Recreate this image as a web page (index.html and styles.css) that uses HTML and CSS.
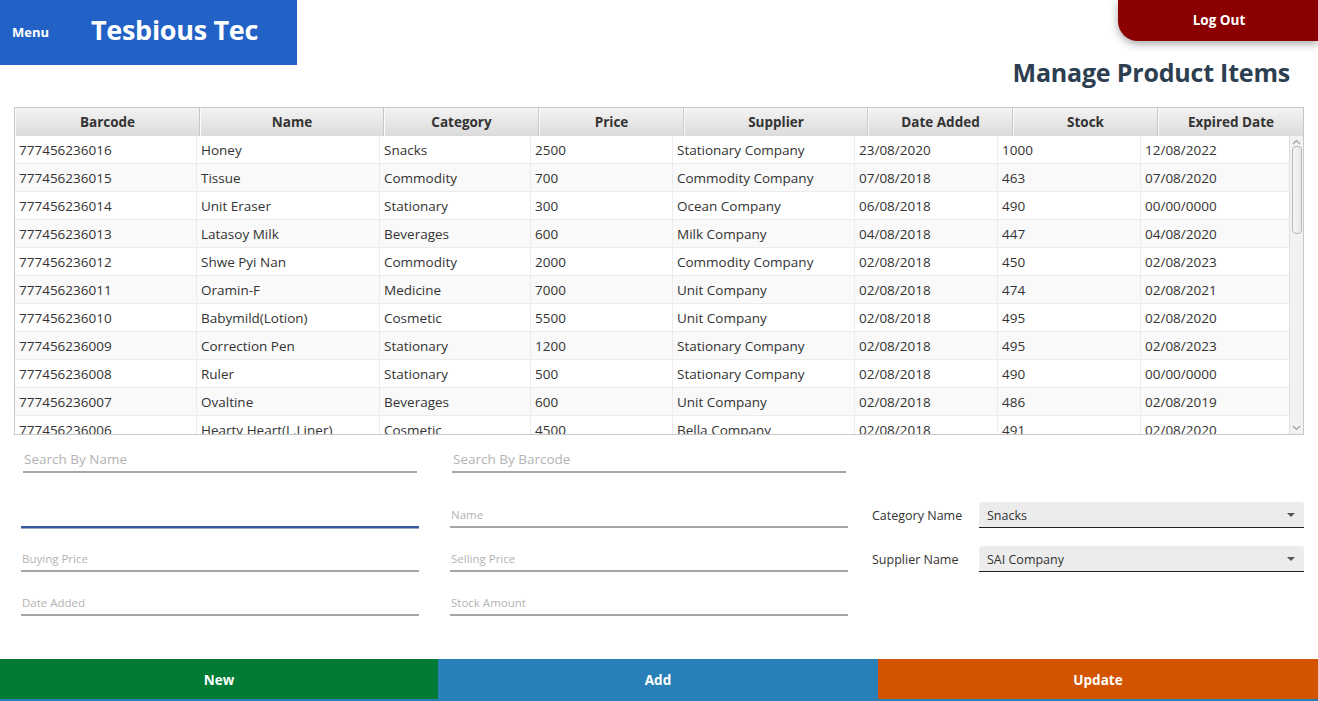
FILE: index.html
```html
<!DOCTYPE html>
<html>
<head>
<meta charset="utf-8">
<title>Manage Product Items</title>
<link rel="stylesheet" href="styles.css">
</head>
<body>
<div class="page">
  <div class="top">
    <div class="brand">
      <span class="menu">Menu</span>
      <span class="brand-name">Tesbious Tec</span>
    </div>
    <div class="top-right">
      <button class="logout">Log Out</button>
      <h1 class="title">Manage Product Items</h1>
    </div>
  </div>

  <div class="table">
    <div class="thead">
      <div class="th">Barcode</div>
      <div class="th">Name</div>
      <div class="th">Category</div>
      <div class="th">Price</div>
      <div class="th">Supplier</div>
      <div class="th">Date Added</div>
      <div class="th">Stock</div>
      <div class="th">Expired Date</div>
    </div>
    <div class="tbody-wrap">
      <div class="tbody">
        <div class="tr"><div>777456236016</div><div>Honey</div><div>Snacks</div><div>2500</div><div>Stationary Company</div><div>23/08/2020</div><div>1000</div><div>12/08/2022</div></div>
        <div class="tr"><div>777456236015</div><div>Tissue</div><div>Commodity</div><div>700</div><div>Commodity Company</div><div>07/08/2018</div><div>463</div><div>07/08/2020</div></div>
        <div class="tr"><div>777456236014</div><div>Unit Eraser</div><div>Stationary</div><div>300</div><div>Ocean Company</div><div>06/08/2018</div><div>490</div><div>00/00/0000</div></div>
        <div class="tr"><div>777456236013</div><div>Latasoy Milk</div><div>Beverages</div><div>600</div><div>Milk Company</div><div>04/08/2018</div><div>447</div><div>04/08/2020</div></div>
        <div class="tr"><div>777456236012</div><div>Shwe Pyi Nan</div><div>Commodity</div><div>2000</div><div>Commodity Company</div><div>02/08/2018</div><div>450</div><div>02/08/2023</div></div>
        <div class="tr"><div>777456236011</div><div>Oramin-F</div><div>Medicine</div><div>7000</div><div>Unit Company</div><div>02/08/2018</div><div>474</div><div>02/08/2021</div></div>
        <div class="tr"><div>777456236010</div><div>Babymild(Lotion)</div><div>Cosmetic</div><div>5500</div><div>Unit Company</div><div>02/08/2018</div><div>495</div><div>02/08/2020</div></div>
        <div class="tr"><div>777456236009</div><div>Correction Pen</div><div>Stationary</div><div>1200</div><div>Stationary Company</div><div>02/08/2018</div><div>495</div><div>02/08/2023</div></div>
        <div class="tr"><div>777456236008</div><div>Ruler</div><div>Stationary</div><div>500</div><div>Stationary Company</div><div>02/08/2018</div><div>490</div><div>00/00/0000</div></div>
        <div class="tr"><div>777456236007</div><div>Ovaltine</div><div>Beverages</div><div>600</div><div>Unit Company</div><div>02/08/2018</div><div>486</div><div>02/08/2019</div></div>
        <div class="tr"><div>777456236006</div><div>Hearty Heart(L.Liner)</div><div>Cosmetic</div><div>4500</div><div>Bella Company</div><div>02/08/2018</div><div>491</div><div>02/08/2020</div></div>
      </div>
      <div class="scrollbar">
        <svg class="arrow" width="9" height="6" viewBox="0 0 9 6"><path d="M1 5 L4.5 1.5 L8 5" fill="none" stroke="#a0a0a0" stroke-width="1.2"/></svg>
        <div class="track"><div class="thumb"></div></div>
        <svg class="arrow" width="9" height="6" viewBox="0 0 9 6"><path d="M1 1 L4.5 4.5 L8 1" fill="none" stroke="#a0a0a0" stroke-width="1.2"/></svg>
      </div>
    </div>
  </div>

  <div class="form">
    <div class="field search first"><span class="ph big">Search By Name</span></div>
    <div class="field search second"><span class="ph big">Search By Barcode</span></div>
    <div class="empty"></div>

    <div class="field focused"></div>
    <div class="field"><span class="ph">Name</span></div>
    <div class="combo-row">
      <span class="combo-label">Category Name</span>
      <div class="combo"><span>Snacks</span><span class="caret"></span></div>
    </div>

    <div class="field"><span class="ph">Buying Price</span></div>
    <div class="field"><span class="ph">Selling Price</span></div>
    <div class="combo-row">
      <span class="combo-label">Supplier Name</span>
      <div class="combo"><span>SAI Company</span><span class="caret"></span></div>
    </div>

    <div class="field"><span class="ph">Date Added</span></div>
    <div class="field"><span class="ph">Stock Amount</span></div>
    <div class="empty"></div>
  </div>

  <div class="actions">
    <button class="act new">New</button>
    <button class="act add">Add</button>
    <button class="act update">Update</button>
  </div>
</div>
</body>
</html>
```

FILE: styles.css
```css
* { box-sizing: border-box; }
html, body { margin: 0; padding: 0; }
body {
  font-family: "Open Sans", "Noto Sans", sans-serif;
  color: #333;
  background: #fff;
  width: 1318px;
  height: 701px;
  overflow: hidden;
}
.page {
  display: flex;
  flex-direction: column;
  height: 701px;
}
.top {
  display: flex;
  justify-content: space-between;
  align-items: flex-start;
}
.brand {
  width: 297px;
  height: 65px;
  background: #2262c6;
  color: #fff;
  display: flex;
  align-items: center;
  padding-left: 12px;
}
.menu {
  font-weight: 700;
  font-size: 13px;
  width: 79px;
  margin-top: -2px;
}
.brand-name {
  font-weight: 700;
  font-size: 27px;
  letter-spacing: -0.3px;
  margin-top: -7px;
}
.top-right {
  display: flex;
  flex-direction: column;
  align-items: flex-end;
}
.logout {
  width: 200px;
  height: 41px;
  border: none;
  background: #8b0000;
  color: #fff;
  font-family: inherit;
  font-weight: 700;
  font-size: 13.5px;
  border-bottom-left-radius: 20px;
  box-shadow: 0 3px 8px rgba(0,0,0,0.35);
  padding: 0 0 2px 2px;
}
.title {
  margin: 15px 28px 0 0;
  font-size: 25px;
  line-height: 32px;
  font-weight: 700;
  color: #2c3e50;
  letter-spacing: -0.2px;
}

/* table */
.table {
  margin: 19px 0 0 14px;
  width: 1290px;
  border: 1px solid #c8c8c8;
  font-size: 13.5px;
}
.thead {
  display: grid;
  grid-template-columns: 185px 184px 155px 145px 184px 145px 145px 145px;
  height: 28px;
  border-bottom: 1px solid #c8c8c8;
}
.th {
  background: linear-gradient(#f3f3f3, #dadada);
  border-right: 1px solid #c8c8c8;
  border-left: 1px solid #fafafa;
  font-weight: 700;
  text-align: center;
  line-height: 29px;
  color: #333;
}
.th:last-child { border-right: none; }
.tbody-wrap {
  display: flex;
  height: 298px;
  overflow: hidden;
}
.tbody {
  flex: 1;
  overflow: hidden;
}
.tr {
  display: grid;
  grid-template-columns: 182px 183px 151px 142px 182px 143px 143px 148px;
  height: 28px;
  border-bottom: 1px solid #ececec;
  background: #fff;
}
.tr:nth-child(even) { background: #f9f9f9; }
.tr > div {
  border-right: 1px solid #ececec;
  padding-left: 4px;
  line-height: 29px;
  white-space: nowrap;
  overflow: hidden;
  color: #333;
}
.tr > div:last-child { border-right: none; }
.scrollbar {
  width: 14px;
  background: #f2f2f2;
  border-left: 1px solid #e0e0e0;
  display: flex;
  flex-direction: column;
  align-items: center;
  padding: 3px 0 3px;
}
.arrow { flex: none; }
.track {
  flex: 1;
  width: 100%;
  padding: 1px 1px 0 2px;
}
.thumb {
  height: 88px;
  border: 1px solid #b8b8b8;
  border-radius: 4px;
  background: linear-gradient(90deg, #f6f6f6, #e8e8e8);
}

/* form */
.form {
  display: grid;
  grid-template-columns: 398px 398px 425px;
  grid-template-rows: 38px 27px 27px 27px;
  column-gap: 31px;
  row-gap: 17px;
  padding-left: 21px;
  margin-top: 11px;
}
.field {
  border-bottom: 2px solid #a6a6a6;
  display: flex;
  align-items: flex-end;
  padding: 0 0 3px 1px;
}
.field.search {
  align-self: start;
  height: 27px;
  margin: 0 2px;
  padding: 0 0 2px 1px;
}
.field.focused {
  border-bottom: 2px solid #3556a3;
  box-shadow: 0 1px 0 #9aa6c8;
}
.ph {
  font-size: 11.5px;
  color: #b3b3b3;
  line-height: 16px;
}
.ph.big {
  font-size: 13.5px;
  line-height: 19px;
}
.combo-row {
  display: flex;
  align-items: flex-end;
  margin-left: -7px;
}
.combo-label {
  width: 107px;
  font-size: 12.5px;
  color: #333;
  line-height: 18px;
  padding-bottom: 3px;
}
.combo {
  flex: 1;
  height: 26px;
  background: #ececec;
  border-radius: 3px 3px 0 0;
  border-bottom: 1.5px solid #222;
  display: flex;
  align-items: center;
  justify-content: space-between;
  padding: 1px 9px 0 8px;
  font-size: 12.5px;
  color: #333;
}
.caret {
  width: 0;
  height: 0;
  border-left: 4px solid transparent;
  border-right: 4px solid transparent;
  border-top: 4px solid #555;
}

/* actions */
.actions {
  margin-top: auto;
  display: flex;
  height: 42px;
  border-bottom: 2px solid #2980b9;
}
.act {
  flex: 1;
  border: none;
  color: #fff;
  font-family: inherit;
  font-weight: 700;
  font-size: 13.5px;
  padding: 2px 0 0 0;
}
.act.new { background: #007b35; flex: 0 0 438px; }
.act.add { background: #2980b9; flex: 0 0 440px; }
.act.update { background: #d35400; flex: 1; }
```
